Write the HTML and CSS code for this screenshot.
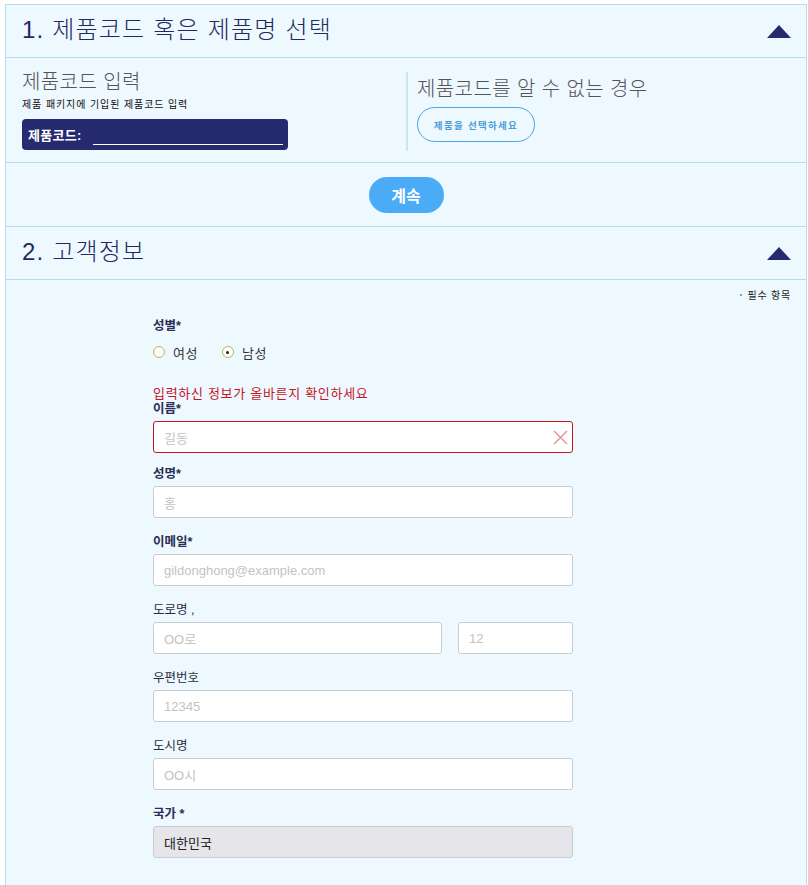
FILE: index.html
```html
<!DOCTYPE html>
<html lang="ko">
<head>
<meta charset="utf-8">
<title>제품 등록</title>
<link rel="stylesheet" href="styles.css">
</head>
<body>
<div class="panel">
  <div class="sec-head">
    <h2 class="sec-title">1. 제품코드 혹은 제품명 선택</h2>
    <span class="tri"></span>
  </div>
  <div class="code-row">
    <div class="code-left">
      <h3 class="sub-title">제품코드 입력</h3>
      <p class="hint">제품 패키지에 기입된 제품코드 입력</p>
      <div class="code-box">
        <span class="code-label">제품코드:</span>
        <span class="code-line"></span>
      </div>
    </div>
    <div class="code-right">
      <h3 class="sub-title">제품코드를 알 수 없는 경우</h3>
      <button class="outline-btn">제품을 선택하세요</button>
    </div>
  </div>
  <div class="continue-row">
    <button class="continue-btn">계속</button>
  </div>
  <div class="sec-head">
    <h2 class="sec-title">2. 고객정보</h2>
    <span class="tri"></span>
  </div>
  <div class="form-area">
    <p class="req-note"><sup>*</sup> 필수 항목</p>
    <div class="form-col">
      <div class="label">성별*</div>
      <div class="radios">
        <label class="radio"><span class="circle"></span>여성</label>
        <label class="radio"><span class="circle checked"></span>남성</label>
      </div>
      <div class="error">입력하신 정보가 올바른지 확인하세요</div>
      <div class="field field-name">
        <div class="label">이름*</div>
        <div class="input invalid"><span class="ph">길동</span>
          <svg class="clear" width="15" height="15" viewBox="0 0 15 15"><path d="M1 1L14 14M14 1L1 14" stroke="#e58c92" stroke-width="1.3" fill="none"/></svg>
        </div>
      </div>
      <div class="field">
        <div class="label">성명*</div>
        <div class="input"><span class="ph">홍</span></div>
      </div>
      <div class="field">
        <div class="label">이메일*</div>
        <div class="input"><span class="ph">gildonghong@example.com</span></div>
      </div>
      <div class="field">
        <div class="label plain">도로명 ,</div>
        <div class="pair">
          <div class="input street"><span class="ph">OO로</span></div>
          <div class="input num"><span class="ph">12</span></div>
        </div>
      </div>
      <div class="field">
        <div class="label plain">우편번호</div>
        <div class="input"><span class="ph">12345</span></div>
      </div>
      <div class="field">
        <div class="label plain">도시명</div>
        <div class="input"><span class="ph">OO시</span></div>
      </div>
      <div class="field">
        <div class="label">국가 *</div>
        <div class="input disabled"><span class="val">대한민국</span></div>
      </div>
    </div>
  </div>
</div>
</body>
</html>
```
FILE: styles.css
```css
* { box-sizing: border-box; }
html, body { margin: 0; padding: 0; background: #ffffff; }
body {
  font-family: "Liberation Sans", "Noto Sans CJK KR", sans-serif;
  color: #222;
}
.panel {
  margin: 4px 0 0 5px;
  width: 802px;
  min-height: 900px;
  background: #eef8ff;
  border: 1px solid #b5ddef;
}
.sec-head {
  height: 53px;
  border-bottom: 1px solid #b5ddef;
  display: flex;
  align-items: center;
  justify-content: space-between;
  padding: 0 15px 0 16px;
}
.sec-title {
  margin: 0;
  font-size: 24px;
  font-weight: 300;
  letter-spacing: 1.2px;
  color: #1f2a60;
  line-height: 28px;
  padding-bottom: 2px;
}
.tri {
  width: 0; height: 0;
  border-left: 12px solid transparent;
  border-right: 12px solid transparent;
  border-bottom: 13px solid #262b6e;
  margin-top: 1px;
}
.code-row {
  height: 105px;
  border-bottom: 1px solid #b5ddef;
  display: flex;
}
.code-left {
  width: 400px;
  padding: 12px 0 0 16px;
}
.code-right {
  margin: 14px 0 11px 0;
  border-left: 2px solid #c9e6f3;
  padding: 5px 0 0 9px;
  flex: 1;
}
.sub-title {
  margin: 0;
  font-size: 20px;
  font-weight: 300;
  letter-spacing: 0.4px;
  color: #555;
  line-height: 24px;
}
.hint {
  margin: 5px 0 0 0;
  font-size: 10px;
  letter-spacing: 0.9px;
  line-height: 12px;
  color: #111;
}
.code-box {
  margin-top: 8px;
  width: 266px;
  height: 31px;
  background: #262a6e;
  border-radius: 4px;
  display: flex;
  align-items: center;
  padding: 0 5px 0 6px;
}
.code-label {
  color: #fff;
  font-weight: bold;
  font-size: 13px;
  letter-spacing: 0.3px;
}
.code-line {
  flex: 1;
  margin-left: 11px;
  height: 16px;
  border-bottom: 1px solid #fff;
  align-self: center;
  margin-top: 4px;
}
.outline-btn {
  margin-top: 6px;
  width: 118px;
  height: 35px;
  border: 1px solid #4aa7e2;
  border-radius: 18px;
  background: transparent;
  color: #4a9fd9;
  font-family: inherit;
  font-weight: bold;
  font-size: 9.5px;
  letter-spacing: 1.3px;
  padding: 0;
}
.continue-row {
  height: 64px;
  border-bottom: 1px solid #b5ddef;
  display: flex;
  justify-content: center;
  padding-top: 14px;
}
.continue-btn {
  width: 75px;
  height: 36px;
  border: none;
  border-radius: 18px;
  background: #4aabf6;
  color: #fff;
  font-family: inherit;
  font-weight: bold;
  font-size: 16px;
  padding: 0;
}
.form-area {
  padding: 10px 15px 20px 0;
}
.req-note {
  margin: 0;
  text-align: right;
  font-size: 10px;
  letter-spacing: 0.8px;
  line-height: 12px;
  color: #222;
}
.req-note sup { font-size: 6px; vertical-align: top; margin-right: 1px; }
.form-col {
  margin: 16px 0 0 147px;
  width: 420px;
}
.label {
  font-size: 12.5px;
  line-height: 16px;
  font-weight: bold;
  color: #2a2e52;
}
.label.plain { font-weight: normal; color: #2a2e40; }
.radios {
  display: flex;
  margin-top: 10px;
  height: 16px;
  align-items: center;
}
.radio {
  display: flex;
  align-items: center;
  font-size: 13px;
  letter-spacing: 0.5px;
  color: #333;
  margin-right: 24px;
}
.circle {
  width: 12px; height: 12px;
  border: 1px solid #b5bd4a;
  border-radius: 50%;
  background: #fff;
  margin-right: 8px;
  position: relative;
}
.circle.checked::after {
  content: "";
  position: absolute;
  left: 3.5px; top: 3.5px;
  width: 3px; height: 3px;
  border-radius: 50%;
  background: #222;
}
.error {
  margin-top: 27px;
  font-size: 13px;
  letter-spacing: 0.7px;
  line-height: 14px;
  color: #c8141e;
}
.field { margin-bottom: 16px; }
.field .label { margin-bottom: 4px; }
.field-name { margin-bottom: 13px; }
.input {
  height: 32px;
  background: #fff;
  border: 1px solid #c9ccd1;
  border-radius: 3px;
  display: flex;
  align-items: center;
  padding: 0 10px;
  font-size: 13px;
  position: relative;
}
.input.invalid { border-color: #c8141e; }
.input .clear { position: absolute; right: 4px; top: 8px; }
.ph { color: #c3c3c3; }
.val { color: #222; }
.input.disabled { background: #e5e5ea; }
.pair { display: flex; justify-content: space-between; }
.input.street { width: 289px; }
.input.num { width: 115px; }
```
